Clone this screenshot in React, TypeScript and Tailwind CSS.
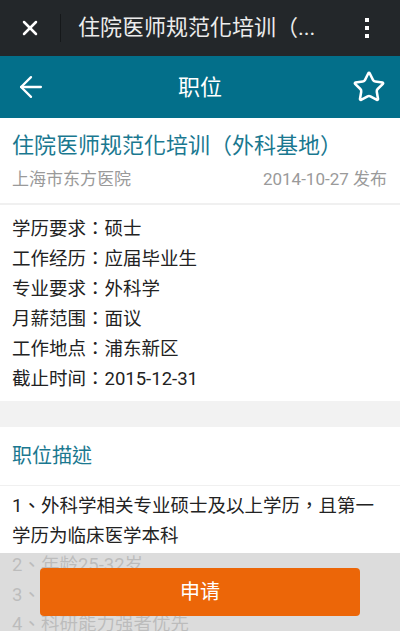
import { ArrowLeft, Star, X } from "lucide-react";

const info = [
  ["学历要求", "硕士"],
  ["工作经历", "应届毕业生"],
  ["专业要求", "外科学"],
  ["月薪范围", "面议"],
  ["工作地点", "浦东新区"],
  ["截止时间", "2015-12-31"],
];

const desc = [
  "1、外科学相关专业硕士及以上学历，且第一学历为临床医学本科",
  "2、年龄25-32岁",
  "3、具有较强的临床实践能力",
  "4、科研能力强者优先",
];

export default function App() {
  return (
    <div
      className="relative h-[631px] w-[400px] overflow-hidden bg-white"
      style={{ fontFamily: "Roboto, 'Noto Sans CJK TC', sans-serif" }}
    >
      {/* webview top bar */}
      <div className="flex h-[56px] items-center bg-[#23272a]">
        <div className="flex w-[60px] items-center justify-center">
          <X size={24} strokeWidth={2.5} className="text-white" />
        </div>
        <div className="h-[28px] w-px bg-[#15181a]" />
        <div className="ml-[17px] flex-1 text-[22px] leading-none text-[#ececec]">
          住院医师规范化培训（...
        </div>
        <div className="mr-[31px] flex flex-col gap-[4px]">
          <span className="block h-[4px] w-[4px] bg-white" />
          <span className="block h-[4px] w-[4px] bg-white" />
          <span className="block h-[4px] w-[4px] bg-white" />
        </div>
      </div>

      {/* app header */}
      <div className="flex h-[62px] items-center justify-between bg-[#036f8a] px-[14px]">
        <ArrowLeft size={34} strokeWidth={1.6} className="text-white" />
        <div className="text-[22px] text-white">职位</div>
        <Star size={34} strokeWidth={1.8} className="text-white" />
      </div>

      {/* title block */}
      <div className="px-[12px] pt-[13px] pb-[12px]">
        <div className="text-[22px] leading-[30px] text-[#1a7890]">
          住院医师规范化培训（外科基地）
        </div>
        <div className="mt-[6px] flex items-center justify-between text-[17px] leading-[24px] text-[#9a9a9a]">
          <span>上海市东方医院</span>
          <span className="mr-[1px]">2014-10-27 发布</span>
        </div>
      </div>
      <div className="h-[2px] bg-[#f0f0f0]" />

      {/* info list */}
      <div className="px-[12px] pt-[9px] pb-[7px]">
        {info.map(([k, v]) => (
          <div key={k} className="text-[18.5px] leading-[30px] text-[#222]">
            {k}：{v}
          </div>
        ))}
      </div>

      <div className="h-[26px] bg-[#f2f2f2]" />

      {/* description */}
      <div className="px-[12px] py-[12px] text-[20px] leading-[34px] text-[#1a7890]">
        职位描述
      </div>
      <div className="h-[1px] bg-[#f0f0f0]" />
      <div className="pt-[6px] pr-[20px] pl-[12px]">
        {desc.map((d) => (
          <div key={d} className="text-[18.5px] leading-[29.5px] text-[#222]">
            {d}
          </div>
        ))}
      </div>

      {/* bottom apply bar */}
      <div className="absolute right-0 bottom-0 left-0 flex h-[78px] items-start justify-center bg-[rgba(214,214,214,0.86)] pt-[15px]">
        <button className="h-[48px] w-[320px] rounded-[4px] bg-[#ec6608] text-[20px] text-white">
          申请
        </button>
      </div>
    </div>
  );
}
